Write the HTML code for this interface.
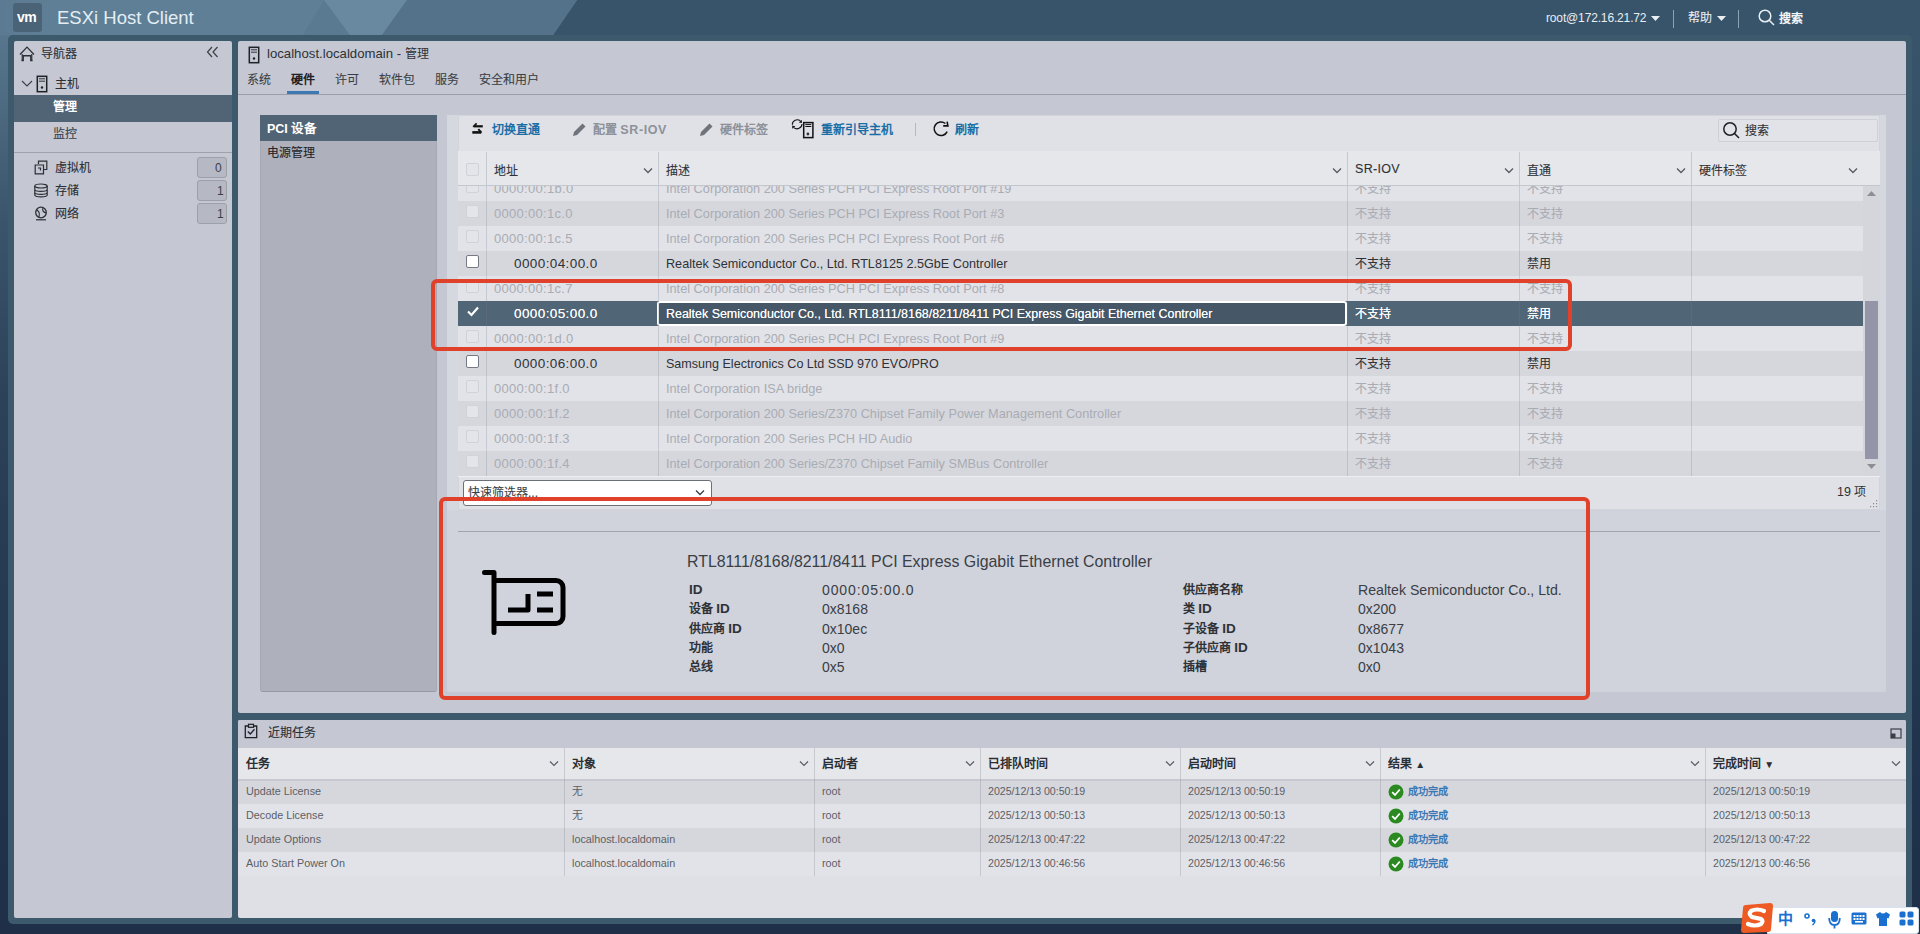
<!DOCTYPE html>
<html lang="zh-CN">
<head>
<meta charset="utf-8">
<style>
*{box-sizing:border-box;margin:0;padding:0}
html,body{width:1920px;height:934px;overflow:hidden}
body{position:relative;font-family:"Liberation Sans",sans-serif;font-size:12px;color:#2e3136;background:#1e2f47}
.a{position:absolute}
.t{position:absolute;white-space:nowrap;line-height:14px}
.k{-webkit-text-stroke:0.1px currentColor}
.cb{position:absolute;width:13px;height:13px;border:1px solid #747983;background:#fff;border-radius:2px}
.cbd{position:absolute;width:13px;height:13px;border:1px solid #d0d2d8;background:#e4e5e9;border-radius:2px}
</style>
</head>
<body>

<div class="a" style="left:0;top:0;width:20px;height:934px;background:linear-gradient(180deg,#5d7c93 0px,#4f6d84 90px,#3a556c 220px,#2c4259 400px,#24384f 650px,#1e2f47 934px)"></div>
<div class="a" style="left:1900px;top:0;width:20px;height:934px;background:linear-gradient(180deg,#38556b 0px,#33506a 200px,#283f57 450px,#22354f 700px,#1e2f47 934px)"></div>
<div class="a" style="left:0;top:924px;width:1920px;height:10px;background:#1e2f47"></div>
<svg class="a" style="left:0;top:0" width="1920" height="35">
<defs><linearGradient id="hg" x1="0" x2="1" y1="0" y2="0"><stop offset="0" stop-color="#5c7b92"/><stop offset="0.1" stop-color="#5f7f96"/><stop offset="1" stop-color="#5f7f96"/></linearGradient></defs>
<rect x="0" y="0" width="1920" height="35" fill="#37546a"/>
<polygon points="0,0 577,0 553,35 0,35" fill="url(#hg)"/>
<polygon points="324,0 350,35 303,35" fill="#5a7a91"/>
<polygon points="324,0 407,0 382,35 350,35" fill="#6889a0"/>
<polygon points="407,0 577,0 553,35 382,35" fill="#54728a"/>
</svg>
<div class="a" style="left:13px;top:3px;width:29px;height:29px;background:#4b6376;border-radius:3px"></div>
<div class="t" style="left:17px;top:10px;color:#fff;font-weight:bold;font-size:14px;letter-spacing:-0.5px">vm</div>
<div class="t" style="left:57px;top:8px;color:#e4eef5;font-size:18.5px;line-height:20px">ESXi Host Client</div>
<div class="a" style="left:8px;top:35px;width:1904px;height:889px;background:#3d596c;border-radius:5px"></div>

<div class="a" style="left:14px;top:41px;width:218px;height:877px;background:#c5c8d3;border-radius:2px"></div>
<div class="a" style="left:238px;top:41px;width:1668px;height:672px;background:#c5c8d3;border-radius:2px"></div>
<div class="a" style="left:238px;top:720px;width:1668px;height:198px;background:#dfe0e5;border-radius:2px"></div>

<div class="t" style="left:1546px;top:11px;color:#e9eef2;font-size:12px;letter-spacing:-0.15px">root@172.16.21.72</div>
<svg class="a" style="left:1651px;top:16px" width="9" height="5"><polygon points="0,0 9,0 4.5,5" fill="#e9eef2"/></svg>
<div class="a" style="left:1673px;top:10px;width:1px;height:18px;background:#8da2b2"></div>
<div class="t k" style="left:1688px;top:11px;color:#e9eef2;font-size:12px">帮助</div>
<svg class="a" style="left:1717px;top:16px" width="9" height="5"><polygon points="0,0 9,0 4.5,5" fill="#e9eef2"/></svg>
<div class="a" style="left:1738px;top:10px;width:1px;height:18px;background:#8da2b2"></div>
<svg class="a" style="left:1758px;top:9px" width="18" height="18"><circle cx="7" cy="7" r="5.8" fill="none" stroke="#e9eef2" stroke-width="1.5"/><line x1="11.2" y1="11.2" x2="16" y2="16" stroke="#e9eef2" stroke-width="1.5"/></svg>
<div class="t" style="left:1779px;top:12px;color:#f2f5f7;font-size:12px;font-weight:bold">搜索</div>


<svg class="a" style="left:19px;top:46px" width="16" height="16"><path d="M1,8.5 L8,1.2 L15,8.5" fill="none" stroke="#2b2e33" stroke-width="1.2"/><path d="M2.5,14.5 H4.2 V9.8 H11.8 V14.5 H13.5" fill="none" stroke="#2b2e33" stroke-width="1.4"/><path d="M3.2,8 V14.5 M12.8,8 V14.5" fill="none" stroke="#2b2e33" stroke-width="1.1"/></svg>
<div class="t k" style="left:41px;top:47px;color:#2b2e33">导航器</div>
<svg class="a" style="left:206px;top:46px" width="14" height="12"><path d="M6,1 L1.5,6 L6,11 M11.5,1 L7,6 L11.5,11" fill="none" stroke="#3b3f45" stroke-width="1.2"/></svg>
<svg class="a" style="left:21px;top:80px" width="12" height="8"><path d="M1,1 L6,6 L11,1" fill="none" stroke="#3b3f45" stroke-width="1.1"/></svg>
<svg class="a" style="left:36px;top:75px" width="12" height="18"><rect x="1.3" y="1.3" width="9.4" height="15.4" fill="none" stroke="#1e2126" stroke-width="1.5"/><line x1="3" y1="3.8" x2="9" y2="3.8" stroke="#1e2126" stroke-width="0.9"/><line x1="3" y1="6.2" x2="9" y2="6.2" stroke="#1e2126" stroke-width="0.9"/><circle cx="6" cy="12.5" r="1.2" fill="#1e2126"/></svg>
<div class="t k" style="left:55px;top:77px;color:#2b2e33">主机</div>
<div class="a" style="left:14px;top:95px;width:218px;height:27px;background:#506475"></div>
<div class="t" style="left:53px;top:100px;color:#fff;font-weight:bold">管理</div>
<div class="t k" style="left:53px;top:127px;color:#3b3f45">监控</div>
<div class="a" style="left:14px;top:152px;width:218px;height:1px;background:#9ea2ad"></div>
<svg class="a" style="left:34px;top:160px" width="14" height="15"><path d="M4.5,4 V1.2 H12.8 V9.5 H10 M1.2,5 H9.5 V13.8 H1.2 Z M4,8 L6.5,8 L6.5,10.5" fill="none" stroke="#2b2e33" stroke-width="1.2"/></svg>
<div class="t k" style="left:55px;top:161px;color:#2b2e33">虚拟机</div>
<svg class="a" style="left:34px;top:183px" width="15" height="15"><ellipse cx="7" cy="3" rx="6.2" ry="2" fill="none" stroke="#2b2e33" stroke-width="1.2"/><path d="M0.8,3 V12 C0.8,14.5 13.2,14.5 13.2,12 V3 M0.8,6.5 C0.8,9 13.2,9 13.2,6.5 M0.8,9.5 C0.8,12 13.2,12 13.2,9.5" fill="none" stroke="#2b2e33" stroke-width="1.2"/></svg>
<div class="t k" style="left:55px;top:184px;color:#2b2e33">存储</div>
<svg class="a" style="left:34px;top:206px" width="14" height="15"><circle cx="7" cy="6.5" r="5.3" fill="none" stroke="#2b2e33" stroke-width="1.3"/><path d="M2.5,4 C5,5 6,7 5,11 M9,2 C8,4 9,6 12,7" fill="none" stroke="#2b2e33" stroke-width="1.1"/><line x1="2" y1="13.8" x2="12" y2="13.8" stroke="#2b2e33" stroke-width="1.2"/></svg>
<div class="t k" style="left:55px;top:207px;color:#2b2e33">网络</div>

<div class="a" style="left:197px;top:157px;width:30px;height:21px;background:#b6b9c4;border:1px solid #9ca0ab;border-radius:3px"></div>
<div class="t" style="left:215px;top:161px;color:#3b3f45">0</div>
<div class="a" style="left:197px;top:180px;width:30px;height:21px;background:#b6b9c4;border:1px solid #9ca0ab;border-radius:3px"></div>
<div class="t" style="left:217px;top:184px;color:#3b3f45">1</div>
<div class="a" style="left:197px;top:203px;width:30px;height:21px;background:#b6b9c4;border:1px solid #9ca0ab;border-radius:3px"></div>
<div class="t" style="left:217px;top:207px;color:#3b3f45">1</div>

<svg class="a" style="left:248px;top:46px" width="12" height="18"><rect x="1.3" y="1.3" width="9.4" height="15.4" fill="none" stroke="#1e2126" stroke-width="1.5"/><line x1="3" y1="3.8" x2="9" y2="3.8" stroke="#1e2126" stroke-width="0.9"/><line x1="3" y1="6.2" x2="9" y2="6.2" stroke="#1e2126" stroke-width="0.9"/><circle cx="6" cy="12.5" r="1.2" fill="#1e2126"/></svg>
<div class="t" style="left:267px;top:47px;font-size:13.2px;color:#2e3136">localhost.localdomain - <span style="font-size:12px">管理</span></div>
<div class="t k" style="left:247px;top:73px;color:#3b3f45">系统</div>
<div class="t" style="left:291px;top:73px;color:#1e2126;font-weight:bold">硬件</div>
<div class="t k" style="left:335px;top:73px;color:#3b3f45">许可</div>
<div class="t k" style="left:379px;top:73px;color:#3b3f45">软件包</div>
<div class="t k" style="left:435px;top:73px;color:#3b3f45">服务</div>
<div class="t k" style="left:479px;top:73px;color:#3b3f45">安全和用户</div>
<div class="a" style="left:238px;top:94px;width:1668px;height:1px;background:#9a9ea9"></div>
<div class="a" style="left:287px;top:91px;width:32px;height:3px;background:#3c79b4"></div>


<div class="a" style="left:260px;top:115px;width:177px;height:577px;background:#aeb1bc;border:1px solid #a6a9b4;border-bottom-color:#959aa4;border-radius:0 0 3px 3px"></div>
<div class="a" style="left:260px;top:115px;width:177px;height:26px;background:#506475"></div>
<div class="t" style="left:267px;top:122px;color:#fff;font-weight:bold;font-size:12.5px">PCI 设备</div>
<div class="t k" style="left:267px;top:146px;color:#22252a">电源管理</div>


<div class="a" style="left:447px;top:115px;width:1439px;height:577px;background:#d0d3dc;border-radius:2px"></div>
<div class="a" style="left:447px;top:115px;width:1439px;height:395px;background:#d6d8df"></div>
<div class="a" style="left:458px;top:115px;width:1422px;height:395px;background:#e0e1e6;border:1px solid #d2d4da"></div>
<div class="a" style="left:458px;top:151px;width:1422px;height:35px;background:#e6e7eb"></div>
<div class="a" style="left:458px;top:185px;width:1422px;height:1px;background:#c3c6cd"></div>


<svg class="a" style="left:471px;top:122px" width="14" height="14"><path d="M3,4.3 H11.8" stroke="#111" stroke-width="2.2"/><path d="M2.2,4.9 L5.6,1.3" stroke="#111" stroke-width="1.7"/><path d="M1.3,10.4 H10.3" stroke="#111" stroke-width="2.6"/><path d="M7.3,7.2 L10.4,10.6" stroke="#111" stroke-width="2"/></svg>
<div class="t" style="left:492px;top:123px;color:#1a6ea6;font-weight:bold">切换直通</div>
<svg class="a" style="left:572px;top:122px" width="15" height="15"><path d="M1,14 L2,10 L10.5,1.5 L13.5,4.5 L5,13 Z" fill="#6e737c"/></svg>
<div class="t" style="left:593px;top:123px;color:#8d9199;font-weight:bold">配置 <span style="font-size:12.5px;letter-spacing:0.6px">SR-IOV</span></div>
<svg class="a" style="left:699px;top:122px" width="15" height="15"><path d="M1,14 L2,10 L10.5,1.5 L13.5,4.5 L5,13 Z" fill="#6e737c"/></svg>
<div class="t" style="left:720px;top:123px;color:#8d9199;font-weight:bold">硬件标签</div>
<svg class="a" style="left:791px;top:118px" width="24" height="21"><path d="M1.3,6.8 A5,5 0 0 1 9.4,2.9" fill="none" stroke="#111" stroke-width="1.1"/><polygon points="10.8,1.8 10.9,4.9 7.8,4.4" fill="#111"/><path d="M11,5.9 A5,5 0 0 1 2.8,9.6" fill="none" stroke="#111" stroke-width="1.1"/><polygon points="1.2,10.8 1.2,7.6 4.3,8.2" fill="#111"/><rect x="12.7" y="4.6" width="9.2" height="15" fill="none" stroke="#111" stroke-width="1.5"/><line x1="14.3" y1="6.6" x2="20.3" y2="6.6" stroke="#111" stroke-width="1"/><line x1="14.3" y1="8.5" x2="20.3" y2="8.5" stroke="#111" stroke-width="1"/><circle cx="16.9" cy="16" r="1.4" fill="#333"/></svg>
<div class="t" style="left:821px;top:123px;color:#1a6ea6;font-weight:bold">重新引导主机</div>
<div class="a" style="left:915px;top:123px;width:1px;height:13px;background:#b5b8bf"></div>
<svg class="a" style="left:932px;top:120px" width="18" height="18"><path d="M15.16,11.57 A6.8,6.8 0 1 1 13.37,3.49" fill="none" stroke="#111" stroke-width="1.5"/><path d="M11.2,5.9 H15.9 L15.1,1.6" fill="none" stroke="#111" stroke-width="1.6" stroke-linejoin="miter"/></svg>
<div class="t" style="left:955px;top:123px;color:#1a6ea6;font-weight:bold">刷新</div>
<div class="a" style="left:1718px;top:119px;width:160px;height:23px;border:1px solid #cdd0d6;background:#e2e3e8;border-radius:2px"></div>
<svg class="a" style="left:1722px;top:121px" width="20" height="20"><circle cx="8" cy="8" r="6.2" fill="none" stroke="#1e2126" stroke-width="1.5"/><line x1="12.5" y1="12.5" x2="17" y2="17" stroke="#1e2126" stroke-width="1.6"/></svg>
<div class="t k" style="left:1745px;top:124px;color:#2e3136">搜索</div>

<div class="cbd" style="left:466px;top:163px"></div>
<div class="a" style="left:486px;top:152px;width:1px;height:34px;background:#c6c8cf"></div>
<div class="t k" style="left:494px;top:164px;color:#2e3136">地址</div>
<svg class="a" style="left:643px;top:167px" width="10" height="7"><path d="M1,1.5 L5,5.5 L9,1.5" fill="none" stroke="#555a62" stroke-width="1.3"/></svg>
<div class="a" style="left:658px;top:152px;width:1px;height:34px;background:#c6c8cf"></div>
<div class="t k" style="left:666px;top:164px;color:#2e3136">描述</div>
<svg class="a" style="left:1332px;top:167px" width="10" height="7"><path d="M1,1.5 L5,5.5 L9,1.5" fill="none" stroke="#555a62" stroke-width="1.3"/></svg>
<div class="a" style="left:1347px;top:152px;width:1px;height:34px;background:#c6c8cf"></div>
<div class="t k" style="left:1355px;top:162px;color:#2e3136"><span style="font-size:12.5px;letter-spacing:0.3px">SR-IOV</span></div>
<svg class="a" style="left:1504px;top:167px" width="10" height="7"><path d="M1,1.5 L5,5.5 L9,1.5" fill="none" stroke="#555a62" stroke-width="1.3"/></svg>
<div class="a" style="left:1519px;top:152px;width:1px;height:34px;background:#c6c8cf"></div>
<div class="t k" style="left:1527px;top:164px;color:#2e3136">直通</div>
<svg class="a" style="left:1676px;top:167px" width="10" height="7"><path d="M1,1.5 L5,5.5 L9,1.5" fill="none" stroke="#555a62" stroke-width="1.3"/></svg>
<div class="a" style="left:1691px;top:152px;width:1px;height:34px;background:#c6c8cf"></div>
<div class="t k" style="left:1699px;top:164px;color:#2e3136">硬件标签</div>
<svg class="a" style="left:1848px;top:167px" width="10" height="7"><path d="M1,1.5 L5,5.5 L9,1.5" fill="none" stroke="#555a62" stroke-width="1.3"/></svg>
<div class="a" style="left:458px;top:186px;width:1405px;height:290px;overflow:hidden">
<div class="a" style="left:0;top:-10px;width:1405px;height:25px;background:#e2e3e8"></div>
<div class="cbd" style="left:8px;top:-6px"></div>
<div class="t" style="left:36px;top:-4px;color:#a9acb3;font-size:13px;letter-spacing:0.3px">0000:00:1b.0</div>
<div class="t" style="left:208px;top:-4px;color:#a9acb3;font-size:12.74px;">Intel Corporation 200 Series PCH PCI Express Root Port #19</div>
<div class="t k" style="left:897px;top:-4px;color:#a9acb3;">不支持</div>
<div class="t k" style="left:1069px;top:-4px;color:#a9acb3;">不支持</div>
<div class="a" style="left:0;top:15px;width:1405px;height:25px;background:#d6d7dd"></div>
<div class="cbd" style="left:8px;top:19px"></div>
<div class="t" style="left:36px;top:21px;color:#a9acb3;font-size:13px;letter-spacing:0.3px">0000:00:1c.0</div>
<div class="t" style="left:208px;top:21px;color:#a9acb3;font-size:12.74px;">Intel Corporation 200 Series PCH PCI Express Root Port #3</div>
<div class="t k" style="left:897px;top:21px;color:#a9acb3;">不支持</div>
<div class="t k" style="left:1069px;top:21px;color:#a9acb3;">不支持</div>
<div class="a" style="left:0;top:40px;width:1405px;height:25px;background:#e2e3e8"></div>
<div class="cbd" style="left:8px;top:44px"></div>
<div class="t" style="left:36px;top:46px;color:#a9acb3;font-size:13px;letter-spacing:0.3px">0000:00:1c.5</div>
<div class="t" style="left:208px;top:46px;color:#a9acb3;font-size:12.74px;">Intel Corporation 200 Series PCH PCI Express Root Port #6</div>
<div class="t k" style="left:897px;top:46px;color:#a9acb3;">不支持</div>
<div class="t k" style="left:1069px;top:46px;color:#a9acb3;">不支持</div>
<div class="a" style="left:0;top:65px;width:1405px;height:25px;background:#d6d7dd"></div>
<div class="cb" style="left:8px;top:69px"></div>
<div class="t" style="left:56px;top:71px;color:#2e3136;font-size:13.5px;letter-spacing:0.4px;">0000:04:00.0</div>
<div class="t" style="left:208px;top:71px;color:#2e3136;font-size:12.64px;">Realtek Semiconductor Co., Ltd. RTL8125 2.5GbE Controller</div>
<div class="t k" style="left:897px;top:71px;color:#2e3136;">不支持</div>
<div class="t k" style="left:1069px;top:71px;color:#2e3136;">禁用</div>
<div class="a" style="left:0;top:90px;width:1405px;height:25px;background:#e2e3e8"></div>
<div class="cbd" style="left:8px;top:94px"></div>
<div class="t" style="left:36px;top:96px;color:#a9acb3;font-size:13px;letter-spacing:0.3px">0000:00:1c.7</div>
<div class="t" style="left:208px;top:96px;color:#a9acb3;font-size:12.74px;">Intel Corporation 200 Series PCH PCI Express Root Port #8</div>
<div class="t k" style="left:897px;top:96px;color:#a9acb3;">不支持</div>
<div class="t k" style="left:1069px;top:96px;color:#a9acb3;">不支持</div>
<div class="a" style="left:0;top:115px;width:1405px;height:25px;background:#506576"></div>
<div class="a" style="left:199px;top:115px;width:690px;height:25px;background:#465767;border:2px solid #fff;border-radius:3px"></div>
<svg class="a" style="left:8px;top:119px" width="14" height="13"><path d="M2,6.5 L5.5,10 L12,2.5" fill="none" stroke="#fff" stroke-width="2.2"/></svg>
<div class="t" style="left:56px;top:121px;color:#fff;font-size:13.5px;letter-spacing:0.4px;text-shadow:0 0 0.5px rgba(255,255,255,0.8);">0000:05:00.0</div>
<div class="t" style="left:208px;top:121px;color:#fff;font-size:12.45px;text-shadow:0 0 0.5px rgba(255,255,255,0.8);">Realtek Semiconductor Co., Ltd. RTL8111/8168/8211/8411 PCI Express Gigabit Ethernet Controller</div>
<div class="t k" style="left:897px;top:121px;color:#fff;text-shadow:0 0 0.5px rgba(255,255,255,0.8);">不支持</div>
<div class="t k" style="left:1069px;top:121px;color:#fff;text-shadow:0 0 0.5px rgba(255,255,255,0.8);">禁用</div>
<div class="a" style="left:0;top:140px;width:1405px;height:25px;background:#e2e3e8"></div>
<div class="cbd" style="left:8px;top:144px"></div>
<div class="t" style="left:36px;top:146px;color:#a9acb3;font-size:13px;letter-spacing:0.3px">0000:00:1d.0</div>
<div class="t" style="left:208px;top:146px;color:#a9acb3;font-size:12.74px;">Intel Corporation 200 Series PCH PCI Express Root Port #9</div>
<div class="t k" style="left:897px;top:146px;color:#a9acb3;">不支持</div>
<div class="t k" style="left:1069px;top:146px;color:#a9acb3;">不支持</div>
<div class="a" style="left:0;top:165px;width:1405px;height:25px;background:#d6d7dd"></div>
<div class="cb" style="left:8px;top:169px"></div>
<div class="t" style="left:56px;top:171px;color:#2e3136;font-size:13.5px;letter-spacing:0.4px;">0000:06:00.0</div>
<div class="t" style="left:208px;top:171px;color:#2e3136;font-size:12.56px;">Samsung Electronics Co Ltd SSD 970 EVO/PRO</div>
<div class="t k" style="left:897px;top:171px;color:#2e3136;">不支持</div>
<div class="t k" style="left:1069px;top:171px;color:#2e3136;">禁用</div>
<div class="a" style="left:0;top:190px;width:1405px;height:25px;background:#e2e3e8"></div>
<div class="cbd" style="left:8px;top:194px"></div>
<div class="t" style="left:36px;top:196px;color:#a9acb3;font-size:13px;letter-spacing:0.3px">0000:00:1f.0</div>
<div class="t" style="left:208px;top:196px;color:#a9acb3;font-size:12.74px;">Intel Corporation ISA bridge</div>
<div class="t k" style="left:897px;top:196px;color:#a9acb3;">不支持</div>
<div class="t k" style="left:1069px;top:196px;color:#a9acb3;">不支持</div>
<div class="a" style="left:0;top:215px;width:1405px;height:25px;background:#d6d7dd"></div>
<div class="cbd" style="left:8px;top:219px"></div>
<div class="t" style="left:36px;top:221px;color:#a9acb3;font-size:13px;letter-spacing:0.3px">0000:00:1f.2</div>
<div class="t" style="left:208px;top:221px;color:#a9acb3;font-size:12.74px;">Intel Corporation 200 Series/Z370 Chipset Family Power Management Controller</div>
<div class="t k" style="left:897px;top:221px;color:#a9acb3;">不支持</div>
<div class="t k" style="left:1069px;top:221px;color:#a9acb3;">不支持</div>
<div class="a" style="left:0;top:240px;width:1405px;height:25px;background:#e2e3e8"></div>
<div class="cbd" style="left:8px;top:244px"></div>
<div class="t" style="left:36px;top:246px;color:#a9acb3;font-size:13px;letter-spacing:0.3px">0000:00:1f.3</div>
<div class="t" style="left:208px;top:246px;color:#a9acb3;font-size:12.74px;">Intel Corporation 200 Series PCH HD Audio</div>
<div class="t k" style="left:897px;top:246px;color:#a9acb3;">不支持</div>
<div class="t k" style="left:1069px;top:246px;color:#a9acb3;">不支持</div>
<div class="a" style="left:0;top:265px;width:1405px;height:25px;background:#d6d7dd"></div>
<div class="cbd" style="left:8px;top:269px"></div>
<div class="t" style="left:36px;top:271px;color:#a9acb3;font-size:13px;letter-spacing:0.3px">0000:00:1f.4</div>
<div class="t" style="left:208px;top:271px;color:#a9acb3;font-size:12.74px;">Intel Corporation 200 Series/Z370 Chipset Family SMBus Controller</div>
<div class="t k" style="left:897px;top:271px;color:#a9acb3;">不支持</div>
<div class="t k" style="left:1069px;top:271px;color:#a9acb3;">不支持</div>
<div class="a" style="left:28px;top:0;width:1px;height:290px;background:rgba(120,125,135,0.25)"></div>
<div class="a" style="left:200px;top:0;width:1px;height:290px;background:rgba(120,125,135,0.25)"></div>
<div class="a" style="left:889px;top:0;width:1px;height:290px;background:rgba(120,125,135,0.25)"></div>
<div class="a" style="left:1061px;top:0;width:1px;height:290px;background:rgba(120,125,135,0.25)"></div>
<div class="a" style="left:1233px;top:0;width:1px;height:290px;background:rgba(120,125,135,0.25)"></div>
</div>

<div class="a" style="left:1863px;top:186px;width:17px;height:290px;background:#d5d6dc"></div>
<svg class="a" style="left:1867px;top:191px" width="9" height="6"><polygon points="0,5 9,5 4.5,0" fill="#8b8e96"/></svg>
<div class="a" style="left:1865px;top:301px;width:13px;height:158px;background:#9495a8"></div>
<svg class="a" style="left:1867px;top:464px" width="9" height="6"><polygon points="0,0 9,0 4.5,5" fill="#8b8e96"/></svg>
<div class="a" style="left:458px;top:476px;width:1422px;height:1px;background:#eceef1"></div>
<div class="a" style="left:463px;top:480px;width:249px;height:26px;background:#fff;border:1px solid #6b7078;border-radius:3px"></div>
<div class="t k" style="left:468px;top:486px;color:#3b3f45">快速筛选器...</div>
<svg class="a" style="left:695px;top:489px" width="10" height="7"><path d="M1,1.5 L5,5.5 L9,1.5" fill="none" stroke="#3b3f45" stroke-width="1.3"/></svg>
<div class="t" style="left:1837px;top:485px;color:#2e3136;font-size:12.5px">19 <span style="font-size:12px">项</span></div>
<svg class="a" style="left:1869px;top:499px" width="9" height="9"><g fill="#8b8e96"><rect x="7" y="1" width="1.2" height="1.2"/><rect x="4" y="4" width="1.2" height="1.2"/><rect x="7" y="4" width="1.2" height="1.2"/><rect x="1" y="7" width="1.2" height="1.2"/><rect x="4" y="7" width="1.2" height="1.2"/><rect x="7" y="7" width="1.2" height="1.2"/></g></svg>


<div class="a" style="left:458px;top:531px;width:1422px;height:1px;background:#a0a4ad"></div>
<svg class="a" style="left:481px;top:568px" width="90" height="68"><path d="M3.5,4.5 H13 V64.5" fill="none" stroke="#000" stroke-width="5" stroke-linecap="round" stroke-linejoin="round"/><path d="M13,12.5 H75 A7,7 0 0 1 82,19.5 V48.5 A7,7 0 0 1 75,55.5 H13" fill="none" stroke="#000" stroke-width="5"/><path d="M27,42 H47 V26" fill="none" stroke="#000" stroke-width="5" stroke-linejoin="round"/><path d="M56,26 H72 M56,42 H72" fill="none" stroke="#000" stroke-width="5"/></svg>
<div class="t" style="left:687px;top:554px;color:#3a3e45;font-size:15.9px;line-height:16px">RTL8111/8168/8211/8411 PCI Express Gigabit Ethernet Controller</div>

<div class="t" style="left:689px;top:583px;color:#2e3136;font-weight:bold"><span style="font-size:13.5px">ID</span></div>
<div class="t" style="left:822px;top:583px;color:#3a3e45;font-size:14px;letter-spacing:0.9px">0000:05:00.0</div>
<div class="t" style="left:689px;top:602.3px;color:#2e3136;font-weight:bold">设备 <span style="font-size:13.5px">ID</span></div>
<div class="t" style="left:822px;top:602.3px;color:#3a3e45;font-size:14px;letter-spacing:0">0x8168</div>
<div class="t" style="left:689px;top:621.5px;color:#2e3136;font-weight:bold">供应商 <span style="font-size:13.5px">ID</span></div>
<div class="t" style="left:822px;top:621.5px;color:#3a3e45;font-size:14px;letter-spacing:0">0x10ec</div>
<div class="t" style="left:689px;top:640.6px;color:#2e3136;font-weight:bold">功能</div>
<div class="t" style="left:822px;top:640.6px;color:#3a3e45;font-size:14px;letter-spacing:0">0x0</div>
<div class="t" style="left:689px;top:660px;color:#2e3136;font-weight:bold">总线</div>
<div class="t" style="left:822px;top:660px;color:#3a3e45;font-size:14px;letter-spacing:0">0x5</div>
<div class="t" style="left:1183px;top:583px;color:#2e3136;font-weight:bold">供应商名称</div>
<div class="t" style="left:1358px;top:583px;color:#3a3e45;font-size:14.17px">Realtek Semiconductor Co., Ltd.</div>
<div class="t" style="left:1183px;top:602.3px;color:#2e3136;font-weight:bold">类 <span style="font-size:13.5px">ID</span></div>
<div class="t" style="left:1358px;top:602.3px;color:#3a3e45;font-size:14px">0x200</div>
<div class="t" style="left:1183px;top:621.5px;color:#2e3136;font-weight:bold">子设备 <span style="font-size:13.5px">ID</span></div>
<div class="t" style="left:1358px;top:621.5px;color:#3a3e45;font-size:14px">0x8677</div>
<div class="t" style="left:1183px;top:640.6px;color:#2e3136;font-weight:bold">子供应商 <span style="font-size:13.5px">ID</span></div>
<div class="t" style="left:1358px;top:640.6px;color:#3a3e45;font-size:14px">0x1043</div>
<div class="t" style="left:1183px;top:660px;color:#2e3136;font-weight:bold">插槽</div>
<div class="t" style="left:1358px;top:660px;color:#3a3e45;font-size:14px">0x0</div>

<div class="a" style="left:238px;top:720px;width:1668px;height:28px;background:#c5c8d3;border-radius:2px 2px 0 0"></div>
<svg class="a" style="left:244px;top:723px" width="14" height="16"><path d="M4.5,3 H1.3 V14.7 H12.7 V3 H9.5" fill="none" stroke="#1e2126" stroke-width="1.3"/><rect x="4.5" y="1.3" width="5" height="3" fill="none" stroke="#1e2126" stroke-width="1.2"/><path d="M3.8,8.5 L6.3,11 L10.5,6.3" fill="none" stroke="#1e2126" stroke-width="1.3"/></svg>
<div class="t k" style="left:268px;top:726px;color:#2b2e33">近期任务</div>
<svg class="a" style="left:1890px;top:728px" width="12" height="11"><rect x="1" y="1" width="10" height="9" fill="none" stroke="#3b3f45" stroke-width="1.2"/><rect x="1" y="5.5" width="4.5" height="4.5" fill="#3b3f45"/></svg>
<div class="a" style="left:238px;top:748px;width:1668px;height:32px;background:#e6e7eb"></div>
<div class="a" style="left:238px;top:779px;width:1668px;height:2px;background:#c7c9d0"></div>

<div class="t" style="left:246px;top:757px;color:#2b2e33;font-weight:bold">任务</div>
<svg class="a" style="left:549px;top:760px" width="10" height="7"><path d="M1,1.5 L5,5.5 L9,1.5" fill="none" stroke="#555a62" stroke-width="1.2"/></svg>
<div class="a" style="left:564px;top:748px;width:1px;height:32px;background:rgba(120,125,135,0.28)"></div>
<div class="t" style="left:572px;top:757px;color:#2b2e33;font-weight:bold">对象</div>
<svg class="a" style="left:799px;top:760px" width="10" height="7"><path d="M1,1.5 L5,5.5 L9,1.5" fill="none" stroke="#555a62" stroke-width="1.2"/></svg>
<div class="a" style="left:814px;top:748px;width:1px;height:32px;background:rgba(120,125,135,0.28)"></div>
<div class="t" style="left:822px;top:757px;color:#2b2e33;font-weight:bold">启动者</div>
<svg class="a" style="left:965px;top:760px" width="10" height="7"><path d="M1,1.5 L5,5.5 L9,1.5" fill="none" stroke="#555a62" stroke-width="1.2"/></svg>
<div class="a" style="left:980px;top:748px;width:1px;height:32px;background:rgba(120,125,135,0.28)"></div>
<div class="t" style="left:988px;top:757px;color:#2b2e33;font-weight:bold">已排队时间</div>
<svg class="a" style="left:1165px;top:760px" width="10" height="7"><path d="M1,1.5 L5,5.5 L9,1.5" fill="none" stroke="#555a62" stroke-width="1.2"/></svg>
<div class="a" style="left:1180px;top:748px;width:1px;height:32px;background:rgba(120,125,135,0.28)"></div>
<div class="t" style="left:1188px;top:757px;color:#2b2e33;font-weight:bold">启动时间</div>
<svg class="a" style="left:1365px;top:760px" width="10" height="7"><path d="M1,1.5 L5,5.5 L9,1.5" fill="none" stroke="#555a62" stroke-width="1.2"/></svg>
<div class="a" style="left:1380px;top:748px;width:1px;height:32px;background:rgba(120,125,135,0.28)"></div>
<div class="t" style="left:1388px;top:757px;color:#2b2e33;font-weight:bold">结果 <span style="font-size:10px">▲</span></div>
<svg class="a" style="left:1690px;top:760px" width="10" height="7"><path d="M1,1.5 L5,5.5 L9,1.5" fill="none" stroke="#555a62" stroke-width="1.2"/></svg>
<div class="a" style="left:1705px;top:748px;width:1px;height:32px;background:rgba(120,125,135,0.28)"></div>
<div class="t" style="left:1713px;top:757px;color:#2b2e33;font-weight:bold">完成时间 <span style="font-size:10px">▼</span></div>
<svg class="a" style="left:1891px;top:760px" width="10" height="7"><path d="M1,1.5 L5,5.5 L9,1.5" fill="none" stroke="#555a62" stroke-width="1.2"/></svg>
<div class="a" style="left:238px;top:781px;width:1668px;height:23px;background:#d6d7dd"></div>
<div class="t" style="left:246px;top:784px;color:#5b5f66;font-size:10.8px">Update License</div>
<div class="t" style="left:572px;top:784px;color:#5b5f66;font-size:10.8px">无</div>
<div class="t" style="left:822px;top:784px;color:#5b5f66;font-size:10.8px">root</div>
<div class="t" style="left:988px;top:784px;color:#5b5f66;font-size:10.6px">2025/12/13 00:50:19</div>
<div class="t" style="left:1188px;top:784px;color:#5b5f66;font-size:10.6px">2025/12/13 00:50:19</div>
<div class="t" style="left:1713px;top:784px;color:#5b5f66;font-size:10.6px">2025/12/13 00:50:19</div>
<svg class="a" style="left:1388px;top:784px" width="16" height="16"><circle cx="8" cy="8" r="7.5" fill="#2a8a1f"/><path d="M4.2,8.2 L7,11 L11.8,5.5" fill="none" stroke="#fff" stroke-width="1.8"/></svg>
<div class="t" style="left:1408px;top:785px;color:#3a78b5;font-size:10.2px;font-weight:bold">成功完成</div>
<div class="a" style="left:238px;top:804px;width:1668px;height:24px;background:#e2e3e8"></div>
<div class="t" style="left:246px;top:808px;color:#5b5f66;font-size:10.8px">Decode License</div>
<div class="t" style="left:572px;top:808px;color:#5b5f66;font-size:10.8px">无</div>
<div class="t" style="left:822px;top:808px;color:#5b5f66;font-size:10.8px">root</div>
<div class="t" style="left:988px;top:808px;color:#5b5f66;font-size:10.6px">2025/12/13 00:50:13</div>
<div class="t" style="left:1188px;top:808px;color:#5b5f66;font-size:10.6px">2025/12/13 00:50:13</div>
<div class="t" style="left:1713px;top:808px;color:#5b5f66;font-size:10.6px">2025/12/13 00:50:13</div>
<svg class="a" style="left:1388px;top:808px" width="16" height="16"><circle cx="8" cy="8" r="7.5" fill="#2a8a1f"/><path d="M4.2,8.2 L7,11 L11.8,5.5" fill="none" stroke="#fff" stroke-width="1.8"/></svg>
<div class="t" style="left:1408px;top:809px;color:#3a78b5;font-size:10.2px;font-weight:bold">成功完成</div>
<div class="a" style="left:238px;top:828px;width:1668px;height:24px;background:#d6d7dd"></div>
<div class="t" style="left:246px;top:832px;color:#5b5f66;font-size:10.8px">Update Options</div>
<div class="t" style="left:572px;top:832px;color:#5b5f66;font-size:10.8px">localhost.localdomain</div>
<div class="t" style="left:822px;top:832px;color:#5b5f66;font-size:10.8px">root</div>
<div class="t" style="left:988px;top:832px;color:#5b5f66;font-size:10.6px">2025/12/13 00:47:22</div>
<div class="t" style="left:1188px;top:832px;color:#5b5f66;font-size:10.6px">2025/12/13 00:47:22</div>
<div class="t" style="left:1713px;top:832px;color:#5b5f66;font-size:10.6px">2025/12/13 00:47:22</div>
<svg class="a" style="left:1388px;top:832px" width="16" height="16"><circle cx="8" cy="8" r="7.5" fill="#2a8a1f"/><path d="M4.2,8.2 L7,11 L11.8,5.5" fill="none" stroke="#fff" stroke-width="1.8"/></svg>
<div class="t" style="left:1408px;top:833px;color:#3a78b5;font-size:10.2px;font-weight:bold">成功完成</div>
<div class="a" style="left:238px;top:852px;width:1668px;height:24px;background:#e2e3e8"></div>
<div class="t" style="left:246px;top:856px;color:#5b5f66;font-size:10.8px">Auto Start Power On</div>
<div class="t" style="left:572px;top:856px;color:#5b5f66;font-size:10.8px">localhost.localdomain</div>
<div class="t" style="left:822px;top:856px;color:#5b5f66;font-size:10.8px">root</div>
<div class="t" style="left:988px;top:856px;color:#5b5f66;font-size:10.6px">2025/12/13 00:46:56</div>
<div class="t" style="left:1188px;top:856px;color:#5b5f66;font-size:10.6px">2025/12/13 00:46:56</div>
<div class="t" style="left:1713px;top:856px;color:#5b5f66;font-size:10.6px">2025/12/13 00:46:56</div>
<svg class="a" style="left:1388px;top:856px" width="16" height="16"><circle cx="8" cy="8" r="7.5" fill="#2a8a1f"/><path d="M4.2,8.2 L7,11 L11.8,5.5" fill="none" stroke="#fff" stroke-width="1.8"/></svg>
<div class="t" style="left:1408px;top:857px;color:#3a78b5;font-size:10.2px;font-weight:bold">成功完成</div>
<div class="a" style="left:564px;top:780px;width:1px;height:96px;background:rgba(120,125,135,0.28)"></div>
<div class="a" style="left:814px;top:780px;width:1px;height:96px;background:rgba(120,125,135,0.28)"></div>
<div class="a" style="left:980px;top:780px;width:1px;height:96px;background:rgba(120,125,135,0.28)"></div>
<div class="a" style="left:1180px;top:780px;width:1px;height:96px;background:rgba(120,125,135,0.28)"></div>
<div class="a" style="left:1380px;top:780px;width:1px;height:96px;background:rgba(120,125,135,0.28)"></div>
<div class="a" style="left:1705px;top:780px;width:1px;height:96px;background:rgba(120,125,135,0.28)"></div>

<div class="a" style="left:431px;top:279px;width:1141px;height:72px;border:4px solid #e0412a;border-radius:6px"></div>
<div class="a" style="left:439px;top:497px;width:1151px;height:203px;border:4px solid #e0412a;border-radius:6px"></div>
<div class="a" style="left:1767px;top:907px;width:152px;height:27px;background:#fff;border:1px solid #d6e2f0;border-radius:0 3px 3px 0"></div>
<svg class="a" style="left:1740px;top:902px" width="34" height="32"><path d="M6,3 L30,1 Q33,1 33,4 L31,27 Q31,30 28,30 L4,31 Q1,31 1,28 L3,6 Q3,3 6,3 Z" fill="#ee5a24"/><path d="M24,9 Q17,6 11,9 Q8,12 12,15 L21,17 Q24,19 21,22 Q15,25 8,22" fill="none" stroke="#fff" stroke-width="4.2" stroke-linecap="round"/></svg>
<div class="t" style="left:1778px;top:911px;color:#1a6fd1;font-weight:bold;font-size:15px;line-height:16px">中</div>
<svg class="a" style="left:1804px;top:912px" width="13" height="14"><circle cx="3" cy="4" r="2" fill="none" stroke="#1a6fd1" stroke-width="1.6"/><circle cx="9.5" cy="8.5" r="1.8" fill="#1a6fd1"/><path d="M11,8.5 Q11,11.5 8.5,13" fill="none" stroke="#1a6fd1" stroke-width="1.5"/></svg>
<svg class="a" style="left:1828px;top:910px" width="13" height="20"><rect x="3" y="1" width="7" height="11" rx="3.5" fill="#1a6fd1"/><path d="M1.2,8 Q1.2,15 6.5,15 Q11.8,15 11.8,8 M6.5,15 V18.5" fill="none" stroke="#1a6fd1" stroke-width="1.8"/></svg>
<svg class="a" style="left:1851px;top:912px" width="16" height="14"><rect x="0.5" y="0.5" width="15" height="12" rx="1.5" fill="#1a6fd1"/><g fill="#fff"><rect x="2.5" y="3" width="2" height="2"/><rect x="5.5" y="3" width="2" height="2"/><rect x="8.5" y="3" width="2" height="2"/><rect x="11.5" y="3" width="2" height="2"/><rect x="2.5" y="6" width="2" height="2"/><rect x="5.5" y="6" width="2" height="2"/><rect x="8.5" y="6" width="2" height="2"/><rect x="11.5" y="6" width="2" height="2"/><rect x="4" y="9" width="8" height="1.6"/></g></svg>
<svg class="a" style="left:1875px;top:911px" width="16" height="16"><path d="M5,1 L1,3.5 L2.5,7.5 L4,7 V15 H12 V7 L13.5,7.5 L15,3.5 L11,1 Q8,4 5,1 Z" fill="#1a6fd1"/></svg>
<svg class="a" style="left:1899px;top:911px" width="15" height="15"><g fill="#1a6fd1"><rect x="0.5" y="0.5" width="6" height="6" rx="1.5"/><rect x="8.5" y="0.5" width="6" height="6" rx="1.5"/><rect x="0.5" y="8.5" width="6" height="6" rx="1.5"/><rect x="8.5" y="8.5" width="6" height="6" rx="1.5"/></g></svg>

</body>
</html>
